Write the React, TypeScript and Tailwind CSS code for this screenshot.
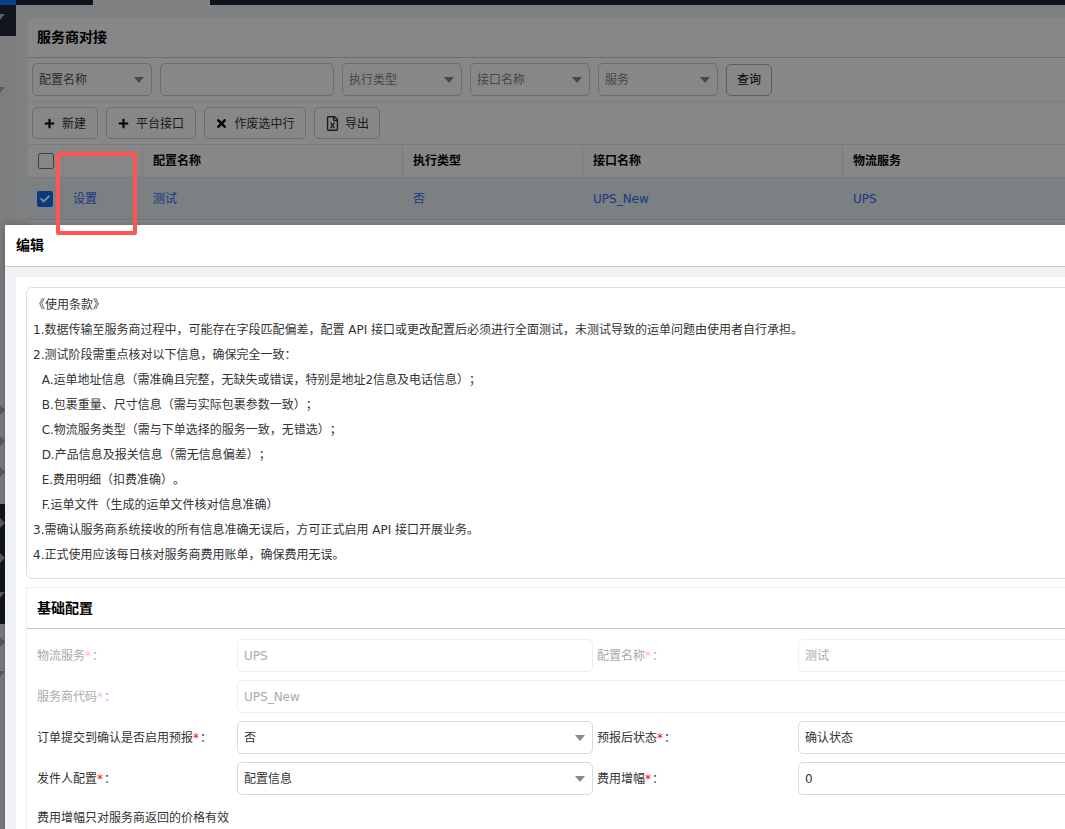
import { FaPlus, FaRegFileExcel, FaTimes, FaCheck } from 'react-icons/fa'
import type { ReactNode } from 'react'

const font = { fontFamily: '"DejaVu Sans", "Noto Sans CJK SC", sans-serif' }

function Caret({ className = '' }: { className?: string }) {
  return (
    <svg width="10" height="6" viewBox="0 0 10 6" className={className}>
      <path d="M0 0h10L5 6z" fill="#888" />
    </svg>
  )
}

function Select({ label, dark }: { label: string; dark?: boolean }) {
  return (
    <div className={`flex h-[33px] w-[120px] items-center justify-between rounded-[5px] border border-[#ccc] bg-white pl-[6px] pr-[7px] ${dark ? 'text-[#555]' : 'text-[#888]'}`}>
      <span>{label}</span>
      <Caret />
    </div>
  )
}

function ToolButton({ width, icon, label, gap }: { width: string; icon: ReactNode; label: string; gap: string }) {
  return (
    <button className={`flex h-[32px] items-center justify-center rounded-[5px] border border-[#ccc] bg-white pt-px text-[#333] ${width} ${gap}`}>
      {icon}
      {label}
    </button>
  )
}

function SideArrow({ dir, top }: { dir: 'down' | 'right'; top: string }) {
  return (
    <div className={`h-0 ${top}`}>
      {dir === 'down' ? (
        <svg width="10" height="6" viewBox="0 0 10 6" className="-ml-[5px] -mt-[3px]">
          <path d="M0 0h10L5 6z" fill="#aaa" />
        </svg>
      ) : (
        <svg width="5" height="10" viewBox="0 0 5 10" className="-mt-[5px]">
          <path d="M0 0l5 5-5 5z" fill="#aaa" />
        </svg>
      )}
    </div>
  )
}

function Sidebar() {
  return (
    <aside className="flex h-full w-[16px] shrink-0 flex-col overflow-hidden bg-[#ececec]">
      <div className="h-[5px] bg-[#1677ff]" />
      <div className="h-[31px] bg-[#22283a]">
        <SideArrow dir="down" top="mt-[12px]" />
      </div>
      <div className="h-[468px]">
        <SideArrow dir="down" top="mt-[54px]" />
        <SideArrow dir="right" top="mt-[323px]" />
        <SideArrow dir="right" top="mt-[36px]" />
        <SideArrow dir="right" top="mt-[36px]" />
      </div>
      <div className="h-[120px] bg-[#22283a]">
        <SideArrow dir="right" top="mt-[19px]" />
        <SideArrow dir="right" top="mt-[40px]" />
        <SideArrow dir="down" top="mt-[42px]" />
      </div>
      <div className="flex-1">
        <SideArrow dir="right" top="mt-[18px]" />
        <SideArrow dir="down" top="mt-[37px]" />
      </div>
    </aside>
  )
}

const columns = [
  { w: 'w-[80px]', title: '', value: '设置' },
  { w: 'w-[260px]', title: '配置名称', value: '测试' },
  { w: 'w-[180px]', title: '执行类型', value: '否' },
  { w: 'w-[260px]', title: '接口名称', value: 'UPS_New' },
  { w: 'w-[260px]', title: '物流服务', value: 'UPS' },
]

function ListPage() {
  return (
    <main className="min-w-0 flex-1 overflow-hidden bg-[#f0f1f6] pl-[11px] pt-[12px]">
      <section className="w-[1300px] border border-[#f4f4f4] bg-white text-[12px]">
        <h1 className="flex h-[40px] items-center border-b border-[#ccc] pl-[9px] text-[14px] font-bold text-black">服务商对接</h1>
        <div className="flex h-[44px] items-center gap-[8px] border-b border-[#eee] pl-[4px]">
          <Select label="配置名称" dark />
          <input readOnly className="h-[33px] w-[174px] rounded-[5px] border border-[#ccc] bg-white" />
          <Select label="执行类型" />
          <Select label="接口名称" />
          <Select label="服务" />
          <button className="h-[32px] w-[46px] rounded-[5px] border border-[#aaa] bg-white text-black">查询</button>
        </div>
        <div className="flex h-[43px] items-center gap-[8px] border-b border-[#e8e8e8] pl-[4px]">
          <ToolButton width="w-[66px]" gap="gap-[7px]" icon={<FaPlus className="size-[11px] text-black" />} label="新建" />
          <ToolButton width="w-[90px]" gap="gap-[7px]" icon={<FaPlus className="size-[11px] text-black" />} label="平台接口" />
          <ToolButton width="w-[102px]" gap="gap-[6px]" icon={<FaTimes className="size-[13px] text-black" />} label="作废选中行" />
          <ToolButton width="w-[66px]" gap="gap-[5px]" icon={<FaRegFileExcel className="size-[15px] text-[#333]" />} label="导出" />
        </div>
        <div className="flex h-[33px] items-center border-b border-[#e8e8e8] font-bold text-black">
          <div className="flex h-full w-[35px] items-center border-r border-[#e8e8e8] pl-[10px]">
            <span className="size-[16px] rounded-[2px] border border-[#777] bg-white" />
          </div>
          {columns.map((c) => (
            <div key={c.title || 'op'} className={`flex h-full items-center border-r border-[#e8e8e8] pl-[10px] ${c.w}`}>{c.title}</div>
          ))}
        </div>
        <div className="flex h-[42px] items-center border-b border-[#ddd] bg-[#e8f1f7] text-[#2f6bf0]">
          <div className="flex w-[35px] pl-[9px]">
            <span className="flex size-[16px] items-center justify-center rounded-[2px] bg-[#1868f8]">
              <FaCheck className="size-[10px] text-white" />
            </span>
          </div>
          {columns.map((c) => (
            <div key={c.value} className={`pl-[10px] ${c.w}`}>{c.value}</div>
          ))}
        </div>
        <div className="h-[40px]" />
      </section>
    </main>
  )
}

const terms = [
  '《使用条款》',
  '1.数据传输至服务商过程中，可能存在字段匹配偏差，配置 API 接口或更改配置后必须进行全面测试，未测试导致的运单问题由使用者自行承担。',
  '2.测试阶段需重点核对以下信息，确保完全一致：',
  '\u00a0\u00a0A.运单地址信息（需准确且完整，无缺失或错误，特别是地址2信息及电话信息）；',
  '\u00a0\u00a0B.包裹重量、尺寸信息（需与实际包裹参数一致）；',
  '\u00a0\u00a0C.物流服务类型（需与下单选择的服务一致，无错选）；',
  '\u00a0\u00a0D.产品信息及报关信息（需无信息偏差）；',
  '\u00a0\u00a0E.费用明细（扣费准确）。',
  '\u00a0\u00a0F.运单文件（生成的运单文件核对信息准确）',
  '3.需确认服务商系统接收的所有信息准确无误后，方可正式启用 API 接口开展业务。',
  '4.正式使用应该每日核对服务商费用账单，确保费用无误。',
]

function Label({ text, disabled, pad }: { text: string; disabled?: boolean; pad?: boolean }) {
  return (
    <div className={`flex items-center ${pad ? 'pl-[4px]' : ''} ${disabled ? 'text-[#aaa]' : 'text-[#333]'}`}>
      {text}
      <span className={disabled ? 'text-[#fbb]' : 'text-[#f00]'}>*</span>
      <span className="ml-[1px]">：</span>
    </div>
  )
}

function Field({ value, disabled, caret, className = '' }: { value: string; disabled?: boolean; caret?: boolean; className?: string }) {
  return (
    <div className={`flex h-[33px] items-center justify-between rounded-[5px] border pl-[6px] pr-[7px] ${disabled ? 'border-[#eee] text-[#aaa]' : 'border-[#d9d9d9] text-[#333]'} ${className}`}>
      <span>{value}</span>
      {caret && <Caret />}
    </div>
  )
}

function EditModal() {
  return (
    <div className="absolute left-[5px] top-[225px] w-[1300px] bg-[#f0f1f6] text-[12px] shadow-[0_0_8px_rgba(0,0,0,0.25)]">
      <h2 className="flex h-[42px] items-center border-b border-[#ccc] bg-white pl-[11px] text-[14px] font-bold text-black">编辑</h2>
      <div className="ml-[11px] mt-[10px] bg-white pb-[60px] pl-[10px] pt-[10px]">
        <div className="h-[292px] rounded-[6px] border border-[#ddd] pl-[6px] pt-[5px] text-[#333]">
          {terms.map((t) => (
            <p key={t} className={`h-[25px] leading-[25px] ${t.startsWith('\u00a0') ? 'pl-px' : ''}`}>{t}</p>
          ))}
        </div>
        <section className="mt-[8px] border border-[#e8f0f5] pb-[40px]">
          <h3 className="flex h-[41px] items-center border-b border-[#c8c8c8] pl-[10px] text-[14px] font-bold text-black">基础配置</h3>
          <div className="grid grid-cols-[200px_356px_205px_1fr] gap-y-[8px] pl-[10px] pt-[10px]">
            <Label text="物流服务" disabled />
            <Field value="UPS" disabled />
            <Label text="配置名称" disabled pad />
            <Field value="测试" disabled />
            <Label text="服务商代码" disabled />
            <Field value="UPS_New" disabled className="col-span-3" />
            <Label text="订单提交到确认是否启用预报" />
            <Field value="否" caret />
            <Label text="预报后状态" pad />
            <Field value="确认状态" />
            <Label text="发件人配置" />
            <Field value="配置信息" caret />
            <Label text="费用增幅" pad />
            <Field value="0" />
          </div>
          <p className="mt-[14px] pl-[10px] text-[#333]">费用增幅只对服务商返回的价格有效</p>
        </section>
      </div>
    </div>
  )
}

export default function App() {
  return (
    <div className="relative h-screen overflow-hidden bg-[#f0f1f6] [text-spacing-trim:space-all]" style={font}>
      <div className="flex h-full flex-col">
        <div className="ml-[16px] flex h-[5px] shrink-0 bg-[#1c2633]">
          <div className="ml-[77px] w-[117px] bg-[#f4f4f4]" />
        </div>
        <div className="-mt-[5px] flex h-full">
          <Sidebar />
          <div className="flex min-w-0 flex-1 flex-col pt-[5px]">
            <ListPage />
          </div>
        </div>
      </div>
      <div className="absolute inset-0 bg-black/[0.47]" />
      <EditModal />
      <div className="absolute left-[56px] top-[152px] h-[83px] w-[81px] rounded-[2px] border-[4px] border-[#ff5555]" />
    </div>
  )
}
